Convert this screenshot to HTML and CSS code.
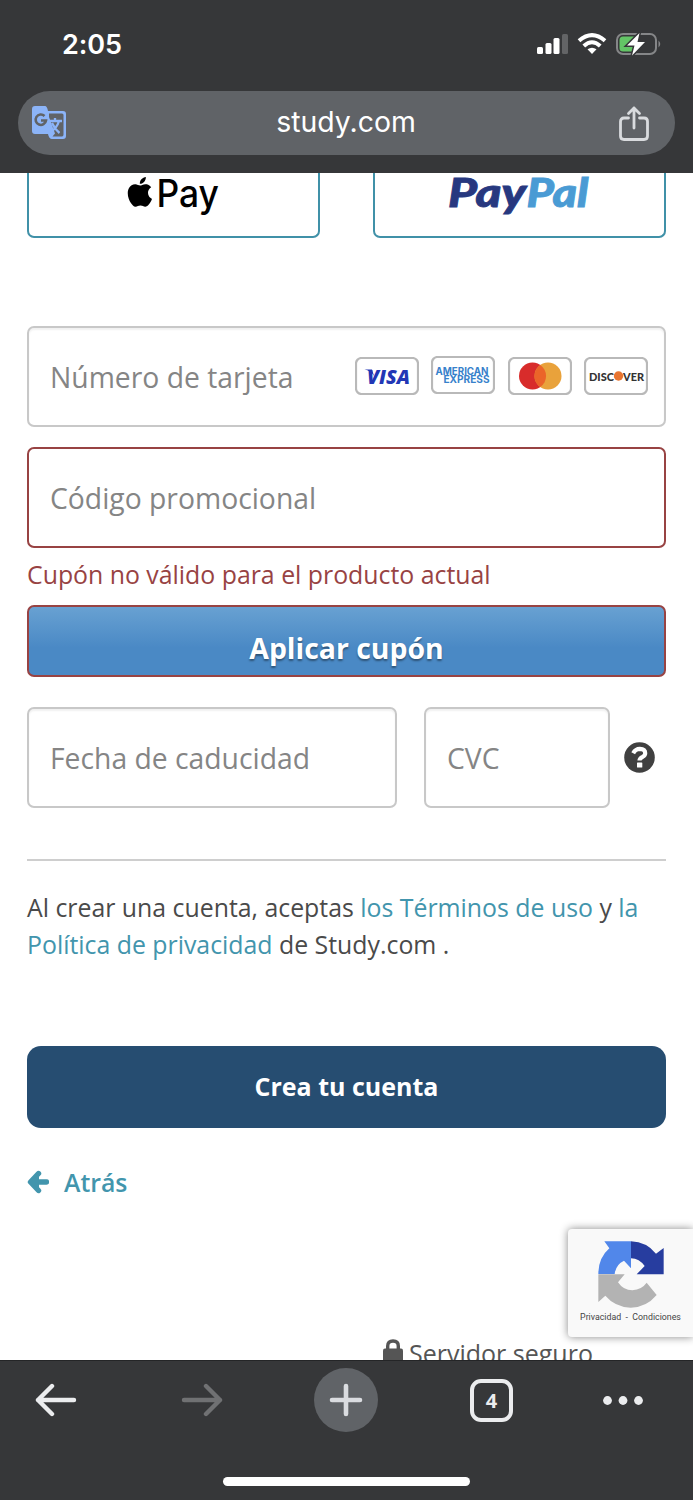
FILE: index.html
```html
<!DOCTYPE html>
<html lang="es">
<head>
<meta charset="utf-8">
<meta name="viewport" content="width=device-width">
<title>study.com</title>
<link rel="stylesheet" href="styles.css">
</head>
<body>
<header class="top">
  <div class="status">
    <span class="clock">2:05</span>
    <svg class="status-icons" width="126" height="26" viewBox="0 0 126 26">
      <g fill="#fff">
        <rect x="0" y="15" width="6" height="7" rx="1.5"/>
        <rect x="8.5" y="11" width="6" height="11" rx="1.5"/>
        <rect x="16.5" y="6" width="6" height="16" rx="1.5"/>
        <rect x="25" y="2" width="6" height="20" rx="1.5" fill="#636466"/>
      </g>
      <g fill="none" stroke="#fff" stroke-width="4">
        <path d="M42 8.700Q55 -2.500 68 8.700"/>
        <path d="M46.800 14Q55 6.500 63.200 14"/>
      </g>
      <path d="M50.500 17.300Q55 14 59.500 17.300L55 22Z" fill="#fff"/>
      <rect x="80" y="2" width="39" height="20" rx="6" fill="none" stroke="#858688" stroke-width="2"/>
      <path d="M121.500 8.500Q125 12 121.500 15.500Z" fill="#858688"/>
      <rect x="82.500" y="4.500" width="17" height="15" rx="3.500" fill="#63c466"/>
      <path d="M102.500 1L90 13.500H97.500L95 23.500L108 10H100.500Z" fill="#fff" stroke="#363739" stroke-width="3" paint-order="stroke"/>
    </svg>
  </div>
  <div class="address">
    <svg class="translate" width="36" height="36" viewBox="0 0 36 36">
      <path d="M3 1H13Q15 1 16 6H31Q34 6 34 9V31Q34 34 31 34H20Q17 34 16 29H3Q0 29 0 26V4Q0 1 3 1Z" fill="#8cb4f8"/>
      <path d="M17 8.500H30Q31.500 8.500 31.500 10V29.500Q31.500 31.500 30 31.500H20.500L23 28.500L17 12Z" fill="#606367"/>
      <path d="M12.500 11A5.200 5.200 0 1 0 14 15.500H9" fill="none" stroke="#606367" stroke-width="2.600"/>
      <path d="M16 16H30M23 13V16M27 16Q25 23 18.500 27M20 18Q22.500 24 27.500 28" fill="none" stroke="#8cb4f8" stroke-width="2.300"/>
    </svg>
    <span class="host">study.com</span>
    <svg class="share" width="30" height="36" viewBox="0 0 30 36">
      <path d="M9.500 12H5Q1.500 12 1.500 15.500V30Q1.500 33.500 5 33.500H25Q28.500 33.500 28.500 30V15.500Q28.500 12 25 12H20.500M15 22V2M9.500 7.500L15 2L20.500 7.500" fill="none" stroke="#d9dbde" stroke-width="2.800" stroke-linecap="round" stroke-linejoin="round"/>
    </svg>
  </div>
</header>

<main class="page">
  <div class="wallets">
    <button class="wallet">
      <svg width="94" height="42" viewBox="0 0 94 42">
        <path transform="translate(-2 4) scale(1.24)" d="M12.152 6.896c-.948 0-2.415-1.078-3.960-1.040-2.040.027-3.910 1.183-4.961 3.014-2.117 3.675-.546 9.103 1.519 12.090 1.013 1.454 2.208 3.090 3.792 3.039 1.520-.065 2.090-.987 3.935-.987 1.831 0 2.350.987 3.960.948 1.637-.026 2.676-1.480 3.676-2.948 1.156-1.688 1.636-3.325 1.662-3.415-.039-.013-3.182-1.221-3.220-4.857-.026-3.040 2.480-4.494 2.597-4.559-1.429-2.090-3.623-2.324-4.390-2.376-2-.156-3.675 1.090-4.610 1.090zM15.530 3.830c.843-1.012 1.400-2.427 1.245-3.830-1.207.052-2.662.805-3.532 1.818-.780.896-1.454 2.338-1.273 3.714 1.338.104 2.715-.688 3.559-1.701"/>
        <text class="apple-word" x="29.500" y="33.500" textLength="62.500" lengthAdjust="spacingAndGlyphs">Pay</text>
      </svg>
    </button>
    <button class="wallet">
      <svg width="146" height="42" viewBox="0 0 146 42">
        <text class="paypal-word" x="1" y="33.500" fill="#27387f" stroke="#27387f" textLength="78" lengthAdjust="spacingAndGlyphs">Pay</text>
        <text class="paypal-word" x="79.500" y="33.500" fill="#4a9bd4" stroke="#4a9bd4" textLength="62" lengthAdjust="spacingAndGlyphs">Pal</text>
      </svg>
    </button>
  </div>

  <div class="field card-number">
    <span>Número de tarjeta</span>
    <div class="brands">
      <svg class="brand" viewBox="0 0 64 38"><rect class="brand-edge" x="1" y="1" width="62" height="36" rx="5.500"/><text class="visa" x="12" y="27" textLength="43" lengthAdjust="spacingAndGlyphs">VISA</text><path d="M9.500 12.500H17L19 19Q15.500 13.500 9.500 12.500Z" fill="#2237b5"/></svg>
      <svg class="brand raised" viewBox="0 0 64 38"><rect class="brand-edge" x="1" y="1" width="62" height="36" rx="5.500"/><text class="amex" x="4.500" y="18.800" textLength="53" lengthAdjust="spacingAndGlyphs">AMERICAN</text><text class="amex" x="12.500" y="27.300" textLength="46" lengthAdjust="spacingAndGlyphs">EXPRESS</text></svg>
      <svg class="brand" viewBox="0 0 64 38"><rect class="brand-edge" x="1" y="1" width="62" height="36" rx="5.500"/><circle cx="24.500" cy="19" r="13.500" fill="#d82c2b"/><circle cx="40" cy="19" r="13.500" fill="#e9a23b"/><path d="M32.250 7.900A13.500 13.500 0 0 1 32.250 30.100A13.500 13.500 0 0 1 32.250 7.900Z" fill="#eb6429"/></svg>
      <svg class="brand" viewBox="0 0 64 38"><rect class="brand-edge" x="1" y="1" width="62" height="36" rx="5.500"/><text class="discover" x="5" y="23.500" textLength="25" lengthAdjust="spacingAndGlyphs">DISC</text><circle cx="34.500" cy="19" r="4.700" fill="#e87531"/><text class="discover" x="39" y="23.500" textLength="21" lengthAdjust="spacingAndGlyphs">VER</text></svg>
    </div>
  </div>

  <div class="field invalid"><span>Código promocional</span></div>
  <p class="error">Cupón no válido para el producto actual</p>
  <button class="apply">Aplicar cupón</button>

  <div class="pair">
    <div class="field expiry"><span>Fecha de caducidad</span></div>
    <div class="field cvc"><span>CVC</span></div>
    <svg class="help" width="31" height="31" viewBox="0 0 31 31"><circle cx="15.500" cy="15.500" r="15.300" fill="#404040"/><path d="M9.200 11.300Q11.500 6.900 15.800 6.900Q21.200 7.100 21.200 11.200Q21.200 13.300 18.700 14.800Q15.500 16.200 15.500 18.600" fill="none" stroke="#fff" stroke-width="4.200"/><rect x="13" y="20.500" width="5.300" height="5" rx=".6" fill="#fff"/></svg>
  </div>

  <p class="terms">Al crear una cuenta, aceptas <a>los Términos de uso</a> y <a>la<br>Política de privacidad</a> de Study.com .</p>
  <button class="create">Crea tu cuenta</button>
  <a class="back">
    <svg width="22" height="24" viewBox="0 0 22 24"><path d="M19.500 12H5M11.500 3.500L3.500 12L11.500 20.500" fill="none" stroke="#4295ad" stroke-width="5.400" stroke-linecap="round" stroke-linejoin="round"/><path d="M3 12L12 4V20Z" fill="#4295ad"/></svg>
    <span>Atrás</span>
  </a>
  <div class="secure">
    <svg width="20" height="26" viewBox="0 0 20 26"><path d="M4.700 11V7Q4.700 2 10 2T15.300 7V11" fill="none" stroke="#555" stroke-width="3.400"/><rect x="0" y="9.500" width="20" height="15" rx="2" fill="#555"/></svg>
    <span>Servidor seguro</span>
  </div>
  <aside class="captcha">
    <svg width="66" height="67" viewBox="144 93 198 201">
      <path fill="#5187ea" d="M163 94H243V175L222 152Q197 164 194 192H145Q145 144 178 115Z"/>
      <path fill="#273d9f" d="M243 94Q290 96 318 131L341 114V193H260L284 168Q268 146 243 145Z"/>
      <path fill="#b3b3b3" d="M145 193H224L204 217Q220 241 247 241Q276 238 290 218L320 255Q288 293 242 293Q195 291 166 257L145 276Z"/>
    </svg>
    <span>Privacidad&nbsp; - &nbsp;Condiciones</span>
  </aside>
</main>

<footer class="bottom">
  <nav class="tools">
    <svg class="go-back" width="42" height="36" viewBox="0 0 42 36"><path d="M39 18H3M17 4L3 18L17 32" fill="none" stroke="#ebecee" stroke-width="4.400" stroke-linecap="round" stroke-linejoin="round"/></svg>
    <svg class="go-forward" width="42" height="36" viewBox="0 0 42 36"><path d="M3 18H39M25 4L39 18L25 32" fill="none" stroke="#707173" stroke-width="4.400" stroke-linecap="round" stroke-linejoin="round"/></svg>
    <span class="plus"><svg width="34" height="34" viewBox="0 0 34 34"><path d="M17 3V31M3 17H31" stroke="#dadce0" stroke-width="4.600" stroke-linecap="round"/></svg></span>
    <span class="tabs">4</span>
    <svg width="42" height="12" viewBox="0 0 42 12" fill="#ebecee"><circle cx="5.500" cy="6.500" r="4.400"/><circle cx="21" cy="6.500" r="4.400"/><circle cx="36.500" cy="6.500" r="4.400"/></svg>
  </nav>
  <div class="home"></div>
</footer>
</body>
</html>
```
FILE: styles.css
```css
* { box-sizing: border-box; }
body {
  margin: 0;
  height: 1500px;
  display: flex;
  flex-direction: column;
  overflow: hidden;
  background: #fff;
  color: #4a4a4a;
  font-family: "Open Sans", sans-serif;
}
svg { display: block; flex: none; }
button { font-family: inherit; padding: 0; margin: 0; }
p { margin: 0; }

.top { height: 173px; background: #363739; padding: 0 18px; }
.status {
  height: 91px;
  display: flex;
  justify-content: space-between;
  padding: 32px 12px 0 44px;
}
.clock {
  font: 600 27px/26px Inter, sans-serif;
  color: #fff;
  letter-spacing: -0.1px;
}
.address {
  height: 64px;
  border-radius: 32px;
  background: #606367;
  display: flex;
  align-items: center;
  justify-content: space-between;
  padding: 0 26px 0 14px;
}
.host {
  margin: -2px 0 0 5px;
  font: 400 28.400px/34px Inter, sans-serif;
  color: #fff;
}
.share { margin-top: 2px; }

.page {
  position: relative;
  height: 1187px;
  overflow: hidden;
  padding: 0 27px;
}
.wallets { display: flex; gap: 53px; }
.wallet {
  flex: 1;
  height: 65px;
  border: 2px solid #4091a8;
  border-top: 0;
  border-radius: 0 0 7px 7px;
  background: #fff;
  display: flex;
  justify-content: center;
}
.apple-word { font: 500 37.500px Inter, sans-serif; }
.paypal-word { font: italic 900 39px Lato, sans-serif; stroke-width: 0.8px; }

.field {
  height: 101px;
  border: 2px solid #c8c8c8;
  border-radius: 7px;
  box-shadow: inset 0 2px 2px rgba(0, 0, 0, 0.06);
  padding: 0 16px 0 21px;
  display: flex;
  align-items: center;
  justify-content: space-between;
  color: #858585;
  font-size: 28.300px;
}
.card-number { margin-top: 88px; }
.brands { display: flex; gap: 12.500px; margin-top: -1px; }
.brand { width: 64px; height: 38px; }
.raised { margin-top: -1px; }
.brand-edge { fill: #fff; stroke: #b9b9b9; stroke-width: 2.200px; }
.visa { font: italic 800 20px "Open Sans", sans-serif; fill: #2237b5; }
.amex { font: 700 9.800px Inter, sans-serif; fill: #3781cb; }
.discover { font: 900 12px Lato, sans-serif; fill: #333; }

.invalid { margin-top: 20px; border-color: #984343; box-shadow: none; }
.error { height: 57px; font-size: 24.850px; line-height: 52px; color: #984343; }
.apply {
  display: block;
  width: 100%;
  height: 72px;
  border: 2px solid #984343;
  border-radius: 7px;
  background: linear-gradient(#68a1d2, #4a89c5 60%);
  color: #fff;
  font-size: 28.400px;
  font-weight: 700;
  line-height: 34px;
  padding-top: 13px;
  text-shadow: 0 2px 2px rgba(0, 0, 0, 0.4);
}
.pair { display: flex; align-items: center; margin-top: 30px; }
.expiry { width: 370px; }
.cvc { width: 186px; margin-left: 27px; }
.help { margin-left: 14px; }

.terms {
  margin-top: 51px;
  padding-top: 28px;
  border-top: 2px solid #cecece;
  font-size: 24.850px;
  line-height: 37px;
  white-space: nowrap;
}
.terms a { color: #4295ad; }
.create {
  display: block;
  width: 100%;
  height: 82px;
  margin-top: 83px;
  border: 0;
  border-radius: 14px;
  padding-bottom: 2px;
  background: #264d71;
  color: #fff;
  font-size: 25px;
  font-weight: 700;
}
.back {
  display: flex;
  align-items: center;
  gap: 15px;
  height: 34px;
  margin-top: 37px;
  color: #4295ad;
  font-size: 24.800px;
  font-weight: 600;
}
.secure {
  display: flex;
  gap: 6px;
  margin: 140px 0 0 356px;
  color: #555;
  font-size: 25px;
  line-height: 28px;
  white-space: nowrap;
}
.captcha {
  position: absolute;
  right: 0;
  top: 1056px;
  width: 125px;
  height: 108px;
  padding-top: 12px;
  background: #f9f9f9;
  border-radius: 4px 0 0 4px;
  box-shadow: 0 0 8px #888;
  display: flex;
  flex-direction: column;
  align-items: center;
  font: 8.800px/19px Roboto, sans-serif;
  color: #444;
}

.bottom {
  height: 140px;
  background: #363739;
  border-top: 1px solid #242527;
}
.tools {
  display: flex;
  align-items: center;
  height: 78px;
  padding-left: 35px;
}
.go-back { margin-right: 104px; }
.go-forward { margin-right: 91px; }
.plus {
  width: 64px;
  height: 64px;
  margin-right: 92px;
  border-radius: 50%;
  background: #606367;
  display: grid;
  place-items: center;
}
.tabs {
  width: 43px;
  height: 43px;
  margin-right: 89px;
  border: 4px solid #ebecee;
  border-radius: 11px;
  display: grid;
  place-items: center;
  color: #ebecee;
  font: 700 20px "Open Sans", sans-serif;
}
.home {
  width: 247px;
  height: 9px;
  margin: 38px auto 0;
  border-radius: 5px;
  background: #fff;
}
```
